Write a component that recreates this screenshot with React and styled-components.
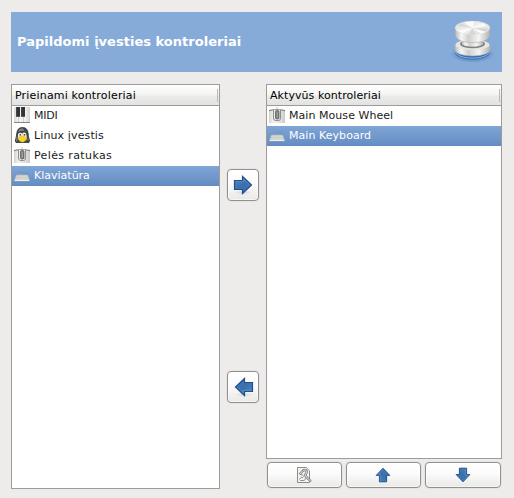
import React from "react";
import styled, { createGlobalStyle, css } from "styled-components";

const Global = createGlobalStyle`
  * { box-sizing: border-box; }
  body { margin: 0; background: #edeceb; font: 11px "DejaVu Sans", sans-serif; color: #1a1a1a; overflow: hidden; }
  svg { display: block; flex: none; }
`;

const Dialog = styled.main`
  width: 514px;
  height: 498px;
  padding: 12px 12px 9px 11px;
  display: flex;
  flex-direction: column;
  gap: 12px;
  background: #edeceb;
`;

const Banner = styled.header`
  height: 60px;
  flex: none;
  padding: 0 6px;
  display: flex;
  align-items: center;
  justify-content: space-between;
  background: #86abd9;
`;

const Title = styled.h1`
  margin: 0;
  font-size: 13px;
  line-height: 16px;
  font-weight: bold;
  letter-spacing: 0.02px;
  color: #fff;
  white-space: nowrap;
`;

const Content = styled.div`
  flex: 1;
  min-height: 0;
  display: grid;
  grid-template-columns: 209px 47px 235px;
`;

const TransferColumn = styled.div`
  display: flex;
  flex-direction: column;
  align-items: center;
  gap: 170px;
  padding: 85px 1px 0 0;
`;

const ActiveColumn = styled.div`
  width: 236px;
  margin-left: -1px;
  display: flex;
  flex-direction: column;
  gap: 3px;
`;

const List = styled.section`
  flex: 1;
  border: 1px solid #9d9c9a;
  background: #fff;
`;

const ListHeader = styled.div`
  height: 21px;
  padding: 0 1px 0 3px;
  display: flex;
  align-items: center;
  justify-content: space-between;
  color: #000;
  line-height: 18px;
  letter-spacing: ${(p) => p.$spacing || 0}px;
  white-space: nowrap;
  border-bottom: 1px solid #9d9c9a;
  background: linear-gradient(#fff 0, #f3f3f2 52%, #ebebe9 53%, #e3e3e1 100%);
`;

const HeaderLabel = styled.span`
  padding-top: 2px;
`;

const ColumnGrip = styled.i`
  width: 1px;
  height: 13px;
  background: #bdbbb8;
`;

const Row = styled.div`
  height: 20px;
  padding: 0 0 0 2px;
  display: flex;
  align-items: center;
  gap: 4px;
  line-height: 20px;
  white-space: nowrap;
  letter-spacing: ${(p) => p.$spacing || 0}px;
  ${(p) => p.$selected && css`
    color: #fff;
    background: linear-gradient(#80a5d7, #648cc2);
  `}
`;

const RowIcon = styled.span`
  height: 18px;
  align-self: flex-start;
  display: flex;
  align-items: flex-end;
  padding-bottom: 1px;
`;

const Button = styled.button`
  width: ${(p) => p.$width}px;
  height: ${(p) => p.$height}px;
  padding: 0 ${(p) => p.$shift || 0}px 0 ${(p) => p.$indent || 0}px;
  display: flex;
  align-items: center;
  justify-content: center;
  border: 1px solid #91908e;
  border-radius: 4px;
  background: linear-gradient(#fff, #fbfbfb 45%, #f1f1f0 75%, #e9e9e7);
  box-shadow: inset 0 0 0 1px #ffffff90, 0 0 0 1px #e6e4e2;
`;

const Actions = styled.div`
  height: 27px;
  padding: 0 0 0 1px;
  display: flex;
  gap: 4px;
`;

const KnobIcon = () => (
  <svg width="48" height="48" viewBox="0 0 48 48">
    <defs>
      <linearGradient id="knobSide">
        <stop offset="0" stopColor="#bcbcbb" />
        <stop offset=".18" stopColor="#f6f6f5" />
        <stop offset=".38" stopColor="#cfcfcd" />
        <stop offset=".68" stopColor="#f5f5f4" />
        <stop offset="1" stopColor="#b2b3b2" />
      </linearGradient>
      <linearGradient id="knobTop" x1="0" y1="0" x2="1" y2="1">
        <stop offset="0" stopColor="#d9d9d8" />
        <stop offset=".5" stopColor="#f1f1f0" />
        <stop offset="1" stopColor="#d2d2d1" />
      </linearGradient>
      <radialGradient id="knobShade">
        <stop offset=".6" stopColor="#3c6ba9" stopOpacity=".6" />
        <stop offset="1" stopColor="#5683bd" stopOpacity="0" />
      </radialGradient>
    </defs>
    <ellipse cx="24.5" cy="36" rx="22" ry="9" fill="url(#knobShade)" />
    <path d="M7 31v3.500c1 9 34 9 35 0V31z" fill="#2f6cb4" />
    <path d="M7.300 33c1 9.500 33.500 9.500 34.400 0" fill="none" stroke="#b5d0ee" strokeWidth=".7" />
    <path d="M7 27c0-7 35-7 35 0v4.500c0 8.500-35 8.500-35 0z" fill="url(#knobSide)" stroke="#b3b4b3" strokeWidth=".6" />
    <ellipse cx="24.5" cy="27" rx="16.800" ry="5" fill="#e6e6e5" />
    <ellipse cx="24.5" cy="26" rx="12.500" ry="4.200" fill="#7f817f" />
    <ellipse cx="24.5" cy="25.200" rx="10.800" ry="3.600" fill="url(#knobSide)" />
    <path d="M7.300 9.500h34.500v7.500c0 3-4 5.500-7.500 6.500-5 1.500-14.500 1.500-19.500 0-3.500-1-7.500-3.500-7.500-6.500z" fill="url(#knobSide)" stroke="#a9a9a7" strokeWidth=".5" />
    <ellipse cx="24.500" cy="9.800" rx="17.200" ry="6.500" fill="url(#knobTop)" stroke="#e4e4e3" strokeWidth=".8" />
    <path d="M24.500 10 16 4.500c3-.8 7-1 10-1zM24.500 10 35 5.500l4 2.500zM24.500 10 9 12.500l6 2.800zM24.500 10l14 4-6 1.800z" fill="#fff" opacity=".8" />
    <path d="m24.500 10-15-2.500 4-1.500zm0 0 15 .8-2 2.500zm0 0-4 6.200h7z" fill="#c6c6c5" opacity=".55" />
  </svg>
);

const MidiIcon = () => (
  <svg width="16" height="16" viewBox="0 0 16 16">
    <defs>
      <linearGradient id="midiBody">
        <stop offset="0" stopColor="#d9dad8" />
        <stop offset=".25" stopColor="#f1f1f0" />
        <stop offset=".7" stopColor="#f0f0ee" />
        <stop offset="1" stopColor="#d2d3d1" />
      </linearGradient>
    </defs>
    <path fill="url(#midiBody)" d="M0 0h16v15H0z" />
    <path fill="#d0d1cf" d="M4 10h1v5H4zM9 10h1v5H9z" />
    <path fill="#54585a" d="M2 0h4v10H2zM7 0h4v10H7z" />
    <path fill="#303436" d="M2.500 0H6v9H2.500zM7.500 0H11v9H7.500z" />
    <path fill="#858684" d="M0 15h16v1H0z" />
  </svg>
);

const PenguinIcon = () => (
  <svg width="16" height="16" viewBox="0 0 16 16">
    <path fill="#45494b" stroke="#202426" strokeWidth=".7" d="M2 15.500 1.300 14l.9-4 .7-4.500C3.400 2 5.400.5 8.500.5c3.200 0 5 1.700 5.500 5l.5 4 1.100 4.500-.7 1.500z" />
    <path fill="#85898a" d="M4.200 5C5 2 6.500 1.400 8.500 1.500 9.500 2 10 3 10 4 8 2.800 6 3.500 4.200 5zM2.300 10l1-.5v5h-1zM13.700 9.500l1 4h-1z" />
    <path fill="#f4f4f0" d="M4 8c0-2.600 3-3 4.500-1.300C9.500 4.700 12.500 5.500 12.500 8.200l.2 3.500-2.300 2.200H6.200L4 11.500z" />
    <path fill="#f8d51e" stroke="#c09614" strokeWidth=".3" d="M4.300 10.300 8.300 8.600l4.200 1.900.2 1.900L9.700 15H7l-2.800-2.600z" />
    <path fill="#202426" d="M5.500 7.200h1.600v1.400H5.500zM9.700 7.200h1.600v1.400H9.700z" />
  </svg>
);

const WheelIcon = () => (
  <svg width="16" height="16" viewBox="0 0 16 16">
    <defs>
      <linearGradient id="wheelBody">
        <stop offset="0" stopColor="#d1d1cf" />
        <stop offset=".25" stopColor="#f0f0ef" />
        <stop offset=".75" stopColor="#dededc" />
        <stop offset="1" stopColor="#cacac8" />
      </linearGradient>
    </defs>
    <path fill="url(#wheelBody)" d="M0 3.500h16V16H0z" />
    <path fill="none" stroke="#686b68" d="M0 3.700c2-1.200 14-1.200 16 0" />
    <path fill="none" stroke="#aaaca9" strokeWidth=".7" d="M8 0v3" />
    <path d="M4.500 3v8q0 2.500 2 2.500h3q2 0 2-2.500V3" fill="#eeeeec" stroke="#8b8d8a" />
    <rect x="6.500" y="3.500" width="3.500" height="8.500" rx="1.200" fill="#7f827f" stroke="#525552" strokeWidth=".7" />
    <path stroke="#a5a8a4" d="M8.300 5v5.500" />
  </svg>
);

const KeyboardIcon = () => (
  <svg width="16" height="16" viewBox="0 0 16 16">
    <path d="M4.500 5.500H13M9 7h4V5.500" fill="none" stroke="#6e93bb" strokeWidth=".6" />
    <path d="m2.600 8-1.800 4.200v1.600h14.400v-1.600L13.500 8z" fill="#dfdfd8" stroke="#b5b9b5" strokeWidth=".6" />
    <path d="M3 9h10.500M2.200 10.500h12M1.600 12h13" stroke="#b1b3af" strokeWidth=".8" strokeDasharray="1 1" />
    <path d="M.7 13.500h14.600" stroke="#eeeee8" />
  </svg>
);

const ArrowIcon = ({ size = 20, angle = 0 }) => (
  <svg width={size} height={size} viewBox="0 0 20 20">
    <defs>
      <linearGradient id="arrowFill" x1="0" y1="0" x2="1" y2="1">
        <stop offset="0" stopColor="#5288c2" />
        <stop offset=".5" stopColor="#3a6fae" />
        <stop offset="1" stopColor="#4476b3" />
      </linearGradient>
      <radialGradient id="arrowShade">
        <stop offset="0" stopColor="#888" stopOpacity=".3" />
        <stop offset="1" stopColor="#aaa" stopOpacity="0" />
      </radialGradient>
    </defs>
    {size === 20 && <ellipse cx="10" cy="17.500" rx="9" ry="2.500" fill="url(#arrowShade)" />}
    <g transform={`rotate(${angle} 10 10)`}>
      <path d="M1.500 5.500h8v-4l9 8.500-9 8.500v-4h-8z" fill="url(#arrowFill)" stroke="#204f8c" strokeWidth="1.200" />
      <path d="M2.700 6.700h8V4.200l6 5.800" fill="none" stroke="#6c9bcb" strokeWidth=".6" />
    </g>
  </svg>
);

const SettingsIcon = () => (
  <svg width="16" height="16" viewBox="0 0 16 16">
    <path d="M1.500.5h8.700l3.300 3.300v11.700h-12z" fill="#f4f4f3" stroke="#8a8c88" />
    <path d="M3.500 7.500 6.500 4c2.500-2 5-.5 4 2l-1.300 1.800L10.500 10l4.500 4.500" fill="none" stroke="#777976" strokeWidth="2.300" />
    <path d="M3.500 7.500 6.500 4c2.500-2 5-.5 4 2l-1.300 1.800L10.500 10l4.500 4.500" fill="none" stroke="#eeeeec" strokeWidth="1" />
    <path d="M3.500 12.500c1-2 2-2.500 3.500-2l1.500-1.500M4 13.500h3c2 0 2.500-1 2.500-2.500M5 7.500l2.500 1" fill="none" stroke="#858783" strokeWidth=".9" />
  </svg>
);

const Item = ({ icon, children, ...rest }) => (
  <Row {...rest}><RowIcon>{icon}</RowIcon><span>{children}</span></Row>
);

export default function App() {
  return (
    <>
      <Global />
      <Dialog>
        <Banner><Title>Papildomi įvesties kontroleriai</Title><KnobIcon /></Banner>
        <Content>
          <List>
            <ListHeader $spacing={0.18}><HeaderLabel>Prieinami kontroleriai</HeaderLabel><ColumnGrip /></ListHeader>
            <Item icon={<MidiIcon />} $spacing={-0.2}>MIDI</Item>
            <Item icon={<PenguinIcon />} $spacing={0.12}>Linux įvestis</Item>
            <Item icon={<WheelIcon />} $spacing={0.38}>Pelės ratukas</Item>
            <Item icon={<KeyboardIcon />} $selected>Klaviatūra</Item>
          </List>
          <TransferColumn>
            <Button $width={32} $height={32}><ArrowIcon /></Button>
            <Button $width={32} $height={32} $indent={2}><ArrowIcon angle={180} /></Button>
          </TransferColumn>
          <ActiveColumn>
            <List>
              <ListHeader $spacing={0.06}><HeaderLabel>Aktyvūs kontroleriai</HeaderLabel><ColumnGrip /></ListHeader>
              <Item icon={<WheelIcon />} $spacing={0.05}>Main Mouse Wheel</Item>
              <Item icon={<KeyboardIcon />} $spacing={0.05} $selected>Main Keyboard</Item>
            </List>
            <Actions>
              <Button $width={75} $height={26} $shift={1}><SettingsIcon /></Button>
              <Button $width={75} $height={26} $shift={2}><ArrowIcon size={16} angle={-90} /></Button>
              <Button $width={76} $height={26} $shift={1}><ArrowIcon size={16} angle={90} /></Button>
            </Actions>
          </ActiveColumn>
        </Content>
      </Dialog>
    </>
  );
}
